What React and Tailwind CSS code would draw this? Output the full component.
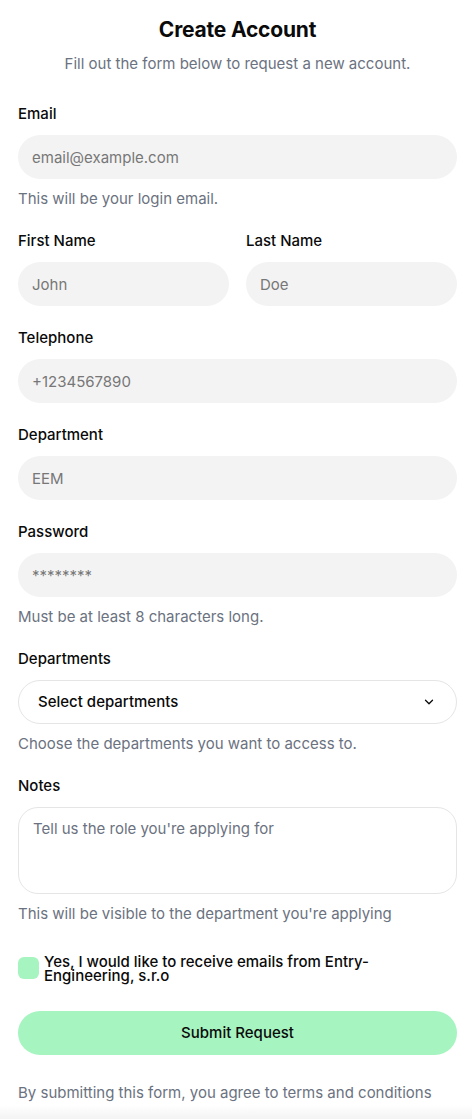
import React, { useState } from 'react'

function Field({ label, placeholder, help, type = 'text' }) {
  return (
    <div className="flex flex-col">
      <label className="text-[15px] leading-5 font-medium text-[#0a0a0a] mb-[11px]">{label}</label>
      <input
        type={type}
        placeholder={placeholder}
        className="h-11 w-full rounded-full bg-[#f3f3f3] px-[14px] text-[15px] text-[#0a0a0a] placeholder:text-[#777777] outline-none"
      />
      {help && <p className="mt-[10px] text-[15px] leading-5 text-[#6b7280]">{help}</p>}
    </div>
  )
}

export default function App() {
  const [agree, setAgree] = useState(false)

  return (
    <div className="relative min-h-[1119px] bg-white font-['Inter',sans-serif]">
      <div className="pl-[18px] pr-[15px] pt-[16px] pb-[20px]">
        <h1 className="text-center text-[21px] leading-7 font-bold text-[#0a0a0a] tracking-[-0.2px]">Create Account</h1>
        <p className="mt-[10px] text-center text-[15px] leading-5 text-[#6b7280]">
          Fill out the form below to request a new account.
        </p>

        <div className="mt-[30px] flex flex-col gap-[22px]">
          <Field label="Email" placeholder="email@example.com" help="This will be your login email." type="email" />

          <div className="grid grid-cols-2 gap-[17px]">
            <Field label="First Name" placeholder="John" />
            <Field label="Last Name" placeholder="Doe" />
          </div>

          <Field label="Telephone" placeholder="+1234567890" />
          <Field label="Department" placeholder="EEM" />
          <Field label="Password" placeholder="********" help="Must be at least 8 characters long." />

          <div className="flex flex-col">
            <label className="text-[15px] leading-5 font-medium text-[#0a0a0a] mb-[11px]">Departments</label>
            <button className="h-11 w-full rounded-full border border-[#e5e5e5] bg-white pl-[19px] pr-[20px] flex items-center justify-between">
              <span className="text-[15px] font-medium text-[#0a0a0a]">Select departments</span>
              <svg width="14" height="14" viewBox="0 0 24 24" fill="none" stroke="#0a0a0a" strokeWidth="2.2" strokeLinecap="round" strokeLinejoin="round">
                <path d="m6 9 6 6 6-6" />
              </svg>
            </button>
            <p className="mt-[10px] text-[15px] leading-5 text-[#6b7280]">Choose the departments you want to access to.</p>
          </div>

          <div className="flex flex-col">
            <label className="text-[15px] leading-5 font-medium text-[#0a0a0a] mb-[11px]">Notes</label>
            <textarea
              placeholder="Tell us the role you're applying for"
              className="h-[87px] w-full resize-none rounded-[20px] border border-[#e5e5e5] bg-white px-[14px] py-[11px] text-[15px] leading-5 placeholder:text-[#6b7280] outline-none"
            />
            <p className="mt-[10px] text-[15px] leading-5 text-[#6b7280]">This will be visible to the department you're applying</p>
          </div>

          <label className="flex items-start gap-[5px] pt-[8px]">
            <span
              onClick={() => setAgree(!agree)}
              className="mt-[3px] h-[22px] w-[21px] shrink-0 rounded-[6px] bg-[#a6f4c0]"
            />
            <span className="text-[15px] leading-[14px] font-medium text-[#0a0a0a] pt-[1px]">
              Yes, I would like to receive emails from Entry-Engineering, s.r.o
            </span>
          </label>

          <button className="mt-[6px] h-11 w-full rounded-full bg-[#a6f4c0] text-[15px] font-medium text-[#0a0a0a]">
            Submit Request
          </button>

          <p className="mt-[6px] text-[15px] leading-5 text-[#6b7280]">
            By submitting this form, you agree to terms and conditions
          </p>
        </div>
      </div>
      <div className="absolute bottom-0 left-0 right-0 h-[18px] bg-gradient-to-b from-white to-[#f0f0f0]" />
    </div>
  )
}
